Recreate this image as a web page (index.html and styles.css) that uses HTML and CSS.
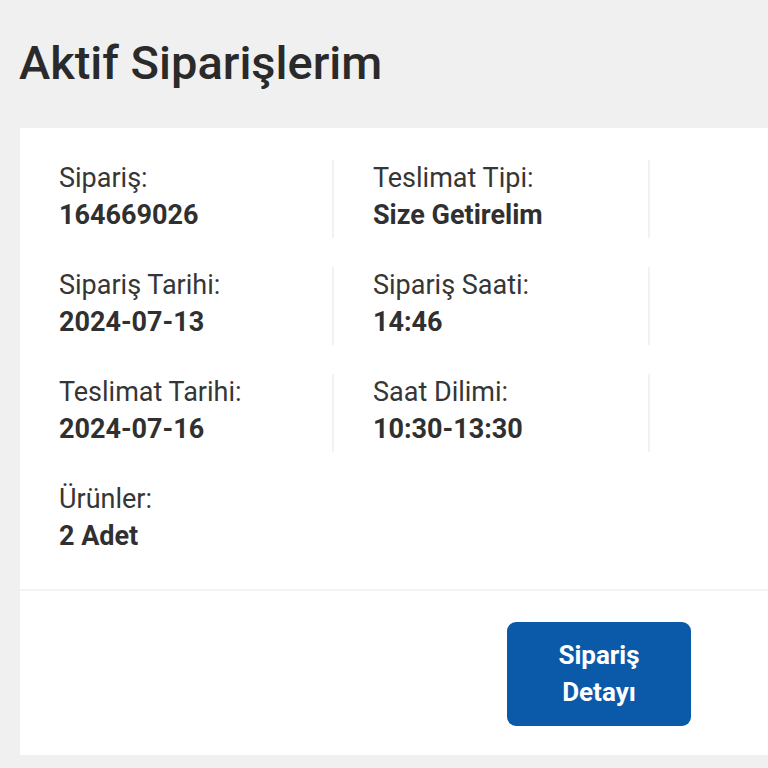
FILE: index.html
```html
<!DOCTYPE html>
<html lang="tr">
<head>
<meta charset="utf-8">
<title>Aktif Siparişlerim</title>
<link rel="stylesheet" href="styles.css">
</head>
<body>
<h1 class="page-title">Aktif Siparişlerim</h1>
<section class="order-card">
  <div class="order-info">
    <div class="info-cell bordered">
      <div class="info-label">Sipariş:</div>
      <div class="info-value">164669026</div>
    </div>
    <div class="info-cell bordered">
      <div class="info-label">Teslimat Tipi:</div>
      <div class="info-value">Size Getirelim</div>
    </div>
    <div class="info-cell"></div>

    <div class="info-cell bordered">
      <div class="info-label">Sipariş Tarihi:</div>
      <div class="info-value">2024-07-13</div>
    </div>
    <div class="info-cell bordered">
      <div class="info-label">Sipariş Saati:</div>
      <div class="info-value">14:46</div>
    </div>
    <div class="info-cell"></div>

    <div class="info-cell bordered">
      <div class="info-label">Teslimat Tarihi:</div>
      <div class="info-value">2024-07-16</div>
    </div>
    <div class="info-cell bordered">
      <div class="info-label">Saat Dilimi:</div>
      <div class="info-value">10:30-13:30</div>
    </div>
    <div class="info-cell"></div>

    <div class="info-cell">
      <div class="info-label">Ürünler:</div>
      <div class="info-value">2 Adet</div>
    </div>
  </div>
  <div class="order-actions">
    <button class="detail-button" type="button">Sipariş Detayı</button>
  </div>
</section>
</body>
</html>
```
FILE: styles.css
```css
html, body {
  margin: 0;
  padding: 0;
}

body {
  background: #f0f0f0;
  font-family: Roboto, "Liberation Sans", Arial, sans-serif;
  color: #2e2e2e;
  overflow: hidden;
  width: 768px;
  height: 768px;
}

.page-title {
  margin: 35px 0 38px 19px;
  font-size: 47px;
  line-height: 55px;
  font-weight: 500;
  color: #2a2a2a;
}

.order-card {
  margin-left: 20px;
  background: #ffffff;
}

.order-info {
  display: grid;
  grid-template-columns: 314px 316px 1fr;
  row-gap: 29px;
  padding: 32px 0 30px 0;
  border-bottom: 2px solid #f3f3f3;
}

.info-cell {
  height: 78px;
  padding-left: 39px;
  box-sizing: border-box;
}

.info-cell.bordered {
  border-right: 2px solid #f2f2f2;
}

.info-label {
  font-size: 27px;
  line-height: 37px;
  font-weight: 400;
  color: #363636;
}

.info-value {
  font-size: 27px;
  line-height: 37px;
  font-weight: 700;
  color: #303030;
}

.order-actions {
  display: flex;
  justify-content: flex-end;
  padding: 31px 77px 29px 0;
}

.detail-button {
  width: 184px;
  height: 104px;
  box-sizing: border-box;
  padding: 0 30px;
  border: none;
  border-radius: 9px;
  background: #0b5aa9;
  color: #ffffff;
  font-family: Roboto, "Liberation Sans", Arial, sans-serif;
  font-size: 26px;
  line-height: 37px;
  font-weight: 700;
  text-align: center;
}
```
